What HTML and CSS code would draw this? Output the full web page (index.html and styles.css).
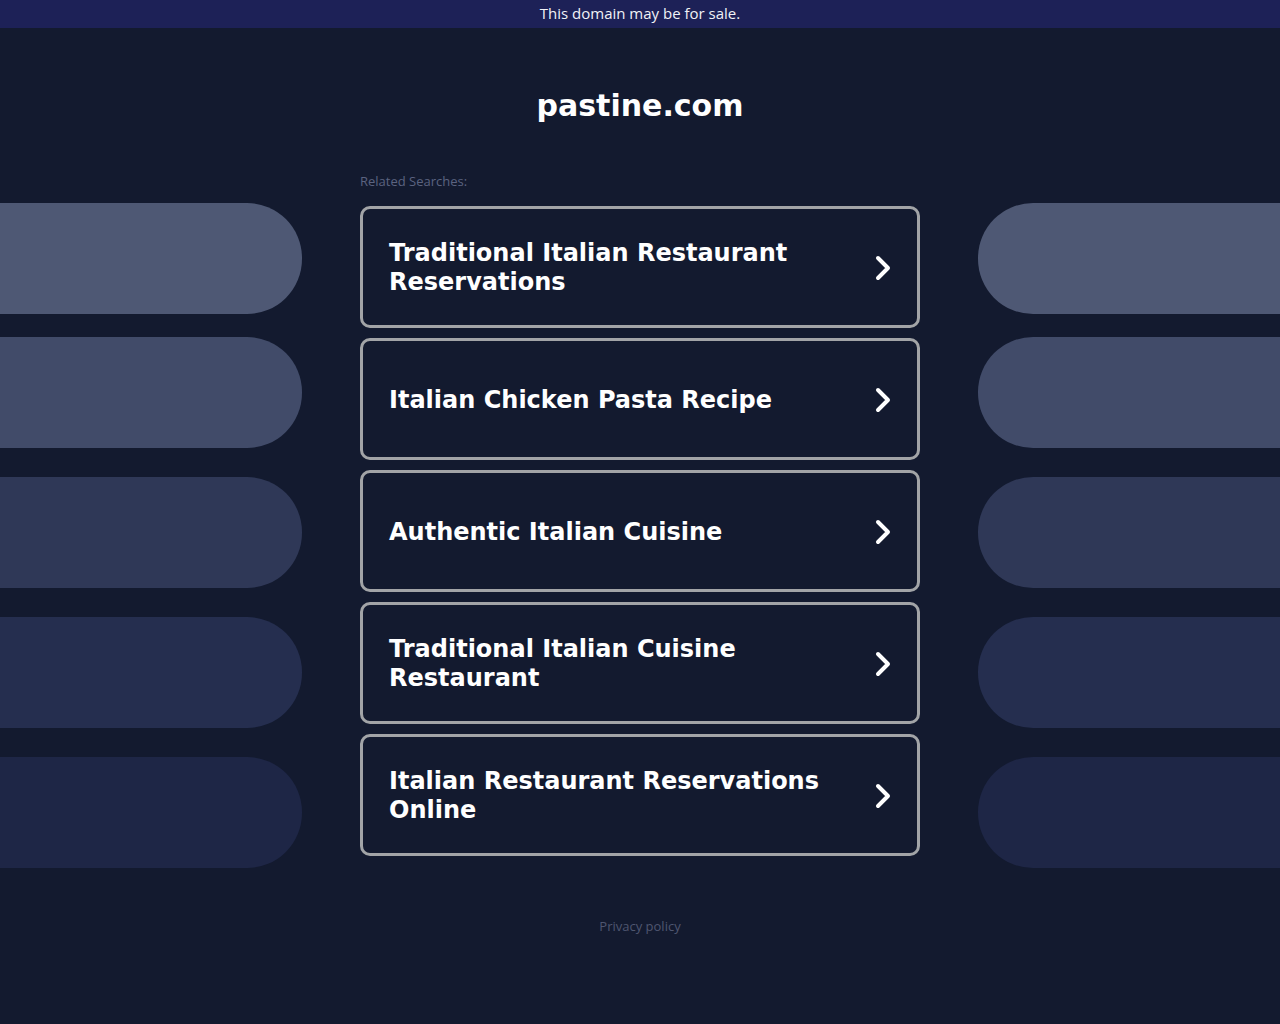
FILE: index.html
```html
<!DOCTYPE html>
<html lang="en">
<head>
<meta charset="utf-8">
<title>pastine.com</title>
<link rel="stylesheet" href="styles.css">
</head>
<body>
<div class="banner">This domain may be for sale.</div>
<h1 class="title">pastine.com</h1>
<div class="layout">
  <div class="pills pills-left">
    <div class="pill p1"></div>
    <div class="pill p2"></div>
    <div class="pill p3"></div>
    <div class="pill p4"></div>
    <div class="pill p5"></div>
  </div>
  <div class="center">
    <div class="label">Related Searches:</div>
    <div class="cards">
      <a class="card" href="#"><span class="card-text">Traditional Italian Restaurant Reservations</span><svg class="chev" viewBox="0 0 20 28" width="20" height="28"><path d="M5 4 L15 14 L5 24" fill="none" stroke="#fff" stroke-width="4" stroke-linecap="round" stroke-linejoin="round"/></svg></a>
      <a class="card" href="#"><span class="card-text">Italian Chicken Pasta Recipe</span><svg class="chev" viewBox="0 0 20 28" width="20" height="28"><path d="M5 4 L15 14 L5 24" fill="none" stroke="#fff" stroke-width="4" stroke-linecap="round" stroke-linejoin="round"/></svg></a>
      <a class="card" href="#"><span class="card-text">Authentic Italian Cuisine</span><svg class="chev" viewBox="0 0 20 28" width="20" height="28"><path d="M5 4 L15 14 L5 24" fill="none" stroke="#fff" stroke-width="4" stroke-linecap="round" stroke-linejoin="round"/></svg></a>
      <a class="card" href="#"><span class="card-text">Traditional Italian Cuisine Restaurant</span><svg class="chev" viewBox="0 0 20 28" width="20" height="28"><path d="M5 4 L15 14 L5 24" fill="none" stroke="#fff" stroke-width="4" stroke-linecap="round" stroke-linejoin="round"/></svg></a>
      <a class="card" href="#"><span class="card-text">Italian Restaurant Reservations Online</span><svg class="chev" viewBox="0 0 20 28" width="20" height="28"><path d="M5 4 L15 14 L5 24" fill="none" stroke="#fff" stroke-width="4" stroke-linecap="round" stroke-linejoin="round"/></svg></a>
    </div>
  </div>
  <div class="pills pills-right">
    <div class="pill p1"></div>
    <div class="pill p2"></div>
    <div class="pill p3"></div>
    <div class="pill p4"></div>
    <div class="pill p5"></div>
  </div>
</div>
<footer class="footer"><a href="#">Privacy policy</a></footer>
</body>
</html>
```
FILE: styles.css
```css
html, body {
  margin: 0;
  padding: 0;
}
body {
  background: #131a2f;
  color: #fff;
  font-family: "DejaVu Sans", sans-serif;
  min-height: 1024px;
}
.banner {
  height: 28px;
  line-height: 27px;
  background: #1d2157;
  color: #f1f2f6;
  text-align: center;
  font-family: "Open Sans", sans-serif;
  font-size: 15px;
}
.title {
  margin: 58px 0 0 0;
  height: 40px;
  line-height: 40px;
  text-align: center;
  font-family: "DejaVu Sans", sans-serif;
  font-weight: bold;
  font-size: 30px;
  color: #fff;
}
.layout {
  display: grid;
  grid-template-columns: 1fr 560px 1fr;
  column-gap: 58px;
  margin-top: 46px;
}
.pills {
  display: flex;
  flex-direction: column;
  padding-top: 31px;
  gap: 29px;
}
.pill {
  height: 111px;
}
.pills-left .pill {
  border-radius: 0 55px 55px 0;
}
.pills-right .pill {
  border-radius: 55px 0 0 55px;
}
.pills .p1 { background: #4e5874; }
.pills .p2 { background: #414b69; margin-top: -6px; }
.pills .p3 { background: #2f3857; }
.pills .p4 { background: #252e4f; }
.pills .p5 { background: #1e2646; }
.center {
  display: flex;
  flex-direction: column;
}
.label {
  font-family: "Open Sans", sans-serif;
  font-size: 13px;
  line-height: 18px;
  color: #5b6380;
  margin-bottom: 16px;
}
.cards {
  display: flex;
  flex-direction: column;
  gap: 10px;
}
.card {
  box-sizing: border-box;
  height: 122px;
  border: 3px solid #a2a4a7;
  border-radius: 10px;
  display: flex;
  align-items: center;
  justify-content: space-between;
  padding: 2px 24px 0 26px;
  text-decoration: none;
  color: #fff;
}
.card-text {
  font-family: "DejaVu Sans", sans-serif;
  font-weight: bold;
  font-size: 24px;
  line-height: 29px;
  max-width: 460px;
}
.chev {
  flex: none;
}
.footer {
  text-align: center;
  margin-top: 49px;
  font-family: "Open Sans", sans-serif;
  font-size: 13px;
  line-height: 18px;
}
.footer a {
  color: #4f5670;
  text-decoration: none;
}
```
